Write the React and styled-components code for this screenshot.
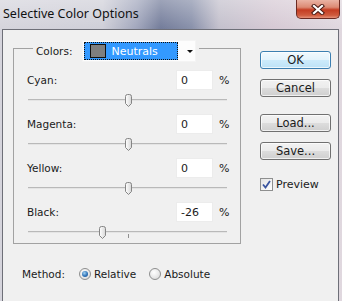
import React from "react";
import styled, { createGlobalStyle } from "styled-components";

const GlobalStyle = createGlobalStyle`
  html, body {
    margin: 0;
    padding: 0;
    background: #f0f0f0;
  }
  body {
    font-family: "DejaVu Sans", Tahoma, sans-serif;
    font-size: 10.5px;
    color: #1b1b1b;
  }
`;

const Window = styled.div`
  width: 342px;
  height: 301px;
  overflow: hidden;
  display: flex;
  flex-direction: column;
  background: linear-gradient(
    90deg,
    #d5d4dc 0%,
    #cfcfd8 30%,
    #a1a6bc 40%,
    #737c9a 47%,
    #8890aa 56%,
    #c3c0cc 64%,
    #d6c9d4 80%,
    #e0d8df 100%
  );
`;

const TitleBar = styled.div`
  height: 29px;
  display: flex;
  justify-content: space-between;
  align-items: flex-start;
  background: linear-gradient(180deg, rgba(255, 255, 255, 0.3), rgba(255, 255, 255, 0));
`;

const Title = styled.div`
  font-family: "Noto Sans", "DejaVu Sans", sans-serif;
  font-size: 12.5px;
  color: #111;
  padding: 6px 0 0 3px;
  line-height: 16px;
`;

const CloseButton = styled.div`
  width: 44px;
  height: 19px;
  margin-right: 2px;
  box-sizing: border-box;
  border: 1px solid #6b2a22;
  border-top: none;
  border-radius: 0 0 5px 5px;
  background: linear-gradient(180deg, #eab3a4 0%, #dc8a74 40%, #c43c22 55%, #cf5b3e 85%, #e5917a 100%);
  display: flex;
  align-items: center;
  justify-content: center;
`;

const Client = styled.div`
  flex: 1;
  margin: 0 3px 0 2px;
  border: 1px solid #6e6f78;
  border-bottom: none;
  background: #f0f0f0;
  display: flex;
  padding: 4px 0 0 10px;
`;

const LeftCol = styled.div`
  width: 228px;
  display: flex;
  flex-direction: column;
`;

const Group = styled.fieldset`
  margin: 0;
  padding: 0;
  border: 1px solid #a2a2a2;
  min-width: 0;
`;

const Legend = styled.legend`
  margin-left: 19px;
  padding: 6px 3px 0;
  display: flex;
  align-items: center;
  gap: 10px;
`;

const Dropdown = styled.div`
  width: 114px;
  height: 22px;
  box-sizing: border-box;
  background: #fdfdfd;
  border: 1px solid #f4f4f4;
  display: flex;
  align-items: center;
`;

const Selected = styled.div`
  width: 94px;
  height: 18px;
  margin-left: 1px;
  box-sizing: border-box;
  background: #3399ff;
  border: 1px dotted #111;
  display: flex;
  align-items: center;
  gap: 5px;
  padding-left: 5px;
  color: #fff;
  font-size: 11px;
`;

const Swatch = styled.span`
  width: 16px;
  height: 14px;
  box-sizing: border-box;
  border: 1px solid #111;
  background: #7f7f7f;
`;

const Arrow = styled.span`
  margin-left: 9px;
  width: 0;
  height: 0;
  border-left: 3px solid transparent;
  border-right: 3px solid transparent;
  border-top: 3px solid #111;
`;

const GroupBody = styled.div`
  padding: 8px 11px 1px 13px;
  display: flex;
  flex-direction: column;
  gap: 4px;
`;

const Row = styled.div`
  height: 20px;
  display: flex;
  align-items: center;
`;

const Label = styled.span`
  flex: 1;
`;

const Input = styled.div`
  width: 37px;
  height: 20px;
  box-sizing: border-box;
  background: #fff;
  border: 1px solid #ececec;
  padding-left: 4px;
  display: flex;
  align-items: center;
  font-size: 11px;
`;

const Percent = styled.span`
  margin-left: 6px;
  width: 10px;
  font-size: 11px;
`;

const Track = styled.div`
  position: relative;
  height: 20px;
  margin: 0 2px 0 1px;
`;

const Line = styled.div`
  position: absolute;
  left: 0;
  right: 0;
  top: 9px;
  height: 2px;
  background: linear-gradient(180deg, #b9b9b9 50%, #e4e4e4 50%);
`;

const Tick = styled.div`
  position: absolute;
  left: 50%;
  top: 12px;
  width: 1px;
  height: 4px;
  background: #909090;
`;

const Thumb = styled.svg`
  position: absolute;
  top: 4px;
  margin-left: -4px;
`;

const MethodRow = styled.div`
  margin-top: 23px;
  padding-left: 9px;
  height: 14px;
  display: flex;
  align-items: center;
`;

const Radio = styled.span`
  width: 12px;
  height: 12px;
  box-sizing: border-box;
  border-radius: 50%;
  border: 1px solid #8e8f8f;
  background: radial-gradient(circle at 40% 35%, #ffffff 0%, #e6e6e6 60%, #cfcfcf 100%);
  display: flex;
  align-items: center;
  justify-content: center;
  margin: 0 3px 0 ${(p) => p.$gap}px;

  &::after {
    content: "";
    width: 6px;
    height: 6px;
    border-radius: 50%;
    display: ${(p) => (p.$checked ? "block" : "none")};
    background: radial-gradient(circle at 40% 35%, #a5d4f2 0%, #2f73b8 55%, #1d4f8c 100%);
  }
`;

const RightCol = styled.div`
  margin: 17px 0 0 19px;
  width: 71px;
  display: flex;
  flex-direction: column;
`;

const Button = styled.div`
  height: 18px;
  box-sizing: border-box;
  margin-top: ${(p) => p.$gap}px;
  border: 1px solid ${(p) => (p.$default ? "#3c7fb1" : "#707070")};
  border-radius: 3px;
  background: ${(p) =>
    p.$default
      ? "linear-gradient(180deg, #f1f9fe 0%, #e3f3fc 50%, #cdebfb 50%, #bde2f6 100%)"
      : "linear-gradient(180deg, #f2f2f2 0%, #ebebeb 50%, #dddddd 50%, #cfcfcf 100%)"};
  box-shadow: inset 0 0 0 1px rgba(255, 255, 255, 0.7);
  display: flex;
  align-items: center;
  justify-content: center;
  font-size: 11.5px;
`;

const CheckRow = styled.div`
  margin-top: 18px;
  display: flex;
  align-items: center;
  gap: 3px;
  font-size: 11px;
`;

const CheckBox = styled.span`
  width: 13px;
  height: 13px;
  box-sizing: border-box;
  border: 1px solid #8e8f8f;
  background: linear-gradient(135deg, #e4e4e4, #ffffff);
  display: flex;
  align-items: center;
  justify-content: center;
`;

const channels = [
  { name: "Cyan:", value: 0 },
  { name: "Magenta:", value: 0 },
  { name: "Yellow:", value: 0 },
  { name: "Black:", value: -26 },
];

function Slider({ value }) {
  return (
    <Track>
      <Line />
      <Tick />
      <Thumb
        width="9"
        height="13"
        viewBox="0 0 9 13"
        style={{ left: `${50 + value / 2}%` }}
      >
        <defs>
          <linearGradient id="th" x1="0" y1="0" x2="1" y2="0">
            <stop offset="0" stopColor="#ffffff" />
            <stop offset="1" stopColor="#d6d6d6" />
          </linearGradient>
        </defs>
        <path
          d="M1.5 2.5 Q1.5 0.5 3.5 0.5 H5.5 Q7.5 0.5 7.5 2.5 V9.5 L4.5 12.5 L1.5 9.5 Z"
          fill="url(#th)"
          stroke="#858585"
        />
      </Thumb>
    </Track>
  );
}

export default function App() {
  return (
    <>
      <GlobalStyle />
      <Window>
        <TitleBar>
          <Title>Selective Color Options</Title>
          <CloseButton>
            <svg width="14" height="11" viewBox="0 0 14 11">
              <path d="M3 2 L11 9 M11 2 L3 9" stroke="#4a1a14" strokeWidth="4.2" strokeLinecap="square" />
              <path d="M3 2 L11 9 M11 2 L3 9" stroke="#ffffff" strokeWidth="2.2" strokeLinecap="square" />
            </svg>
          </CloseButton>
        </TitleBar>
        <Client>
          <LeftCol>
            <Group>
              <Legend>
                <span>Colors:</span>
                <Dropdown>
                  <Selected>
                    <Swatch />
                    <span>Neutrals</span>
                  </Selected>
                  <Arrow />
                </Dropdown>
              </Legend>
              <GroupBody>
                {channels.map((c) => (
                  <div key={c.name}>
                    <Row>
                      <Label>{c.name}</Label>
                      <Input>{c.value}</Input>
                      <Percent>%</Percent>
                    </Row>
                    <Slider value={c.value} />
                  </div>
                ))}
              </GroupBody>
            </Group>
            <MethodRow>
              <span>Method:</span>
              <Radio $checked $gap={14} />
              <span>Relative</span>
              <Radio $gap={13} />
              <span>Absolute</span>
            </MethodRow>
          </LeftCol>
          <RightCol>
            <Button $default $gap={0}>OK</Button>
            <Button $gap={10}>Cancel</Button>
            <Button $gap={17}>Load...</Button>
            <Button $gap={10}>Save...</Button>
            <CheckRow>
              <CheckBox>
                <svg width="9" height="9" viewBox="0 0 9 9">
                  <path d="M1 4.5 L3.5 7.5 L8 1" fill="none" stroke="#3a55a0" strokeWidth="1.8" />
                </svg>
              </CheckBox>
              <span>Preview</span>
            </CheckRow>
          </RightCol>
        </Client>
      </Window>
    </>
  );
}
